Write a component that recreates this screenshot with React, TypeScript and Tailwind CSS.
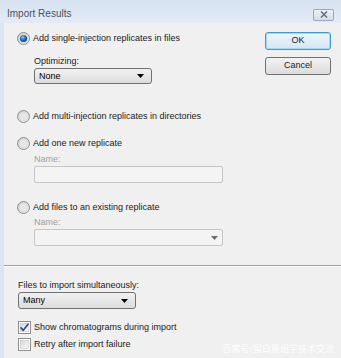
import React from "react";

const font = { fontFamily: '"Liberation Sans", Arial, sans-serif' };

function Radio({ checked }: { checked?: boolean }) {
  return (
    <svg width="13" height="13" viewBox="0 0 13 13" className="shrink-0">
      <defs>
        <linearGradient id={checked ? "rgc" : "rgu"} x1="0" y1="0" x2="1" y2="1">
          <stop offset="0" stopColor="#c9c9c9" />
          <stop offset="1" stopColor="#f7f7f7" />
        </linearGradient>
        <radialGradient id="dot" cx="0.4" cy="0.35" r="0.7">
          <stop offset="0" stopColor="#8fd1f5" />
          <stop offset="0.5" stopColor="#1a74c4" />
          <stop offset="1" stopColor="#0c3f78" />
        </radialGradient>
      </defs>
      <circle cx="6.5" cy="6.5" r="6" fill={`url(#${checked ? "rgc" : "rgu"})`} stroke="#8f8f8f" strokeWidth="1" />
      <circle cx="6.5" cy="6.5" r="4.5" fill="#e6e6e6" stroke="#d0d0d0" strokeWidth="0.6" />
      {checked && <circle cx="6.5" cy="6.5" r="3.6" fill="url(#dot)" />}
    </svg>
  );
}

function Checkbox({ checked }: { checked?: boolean }) {
  return (
    <svg width="13" height="13" viewBox="0 0 13 13" className="shrink-0">
      <defs>
        <linearGradient id="cbg" x1="0" y1="0" x2="1" y2="1">
          <stop offset="0" stopColor="#d6d6d6" />
          <stop offset="1" stopColor="#fbfbfb" />
        </linearGradient>
      </defs>
      <rect x="0.5" y="0.5" width="12" height="12" fill="#fff" stroke="#8e8f8f" />
      <rect x="2.5" y="2.5" width="8" height="8" fill="url(#cbg)" stroke="#c6c6c6" strokeWidth="0.6" />
      {checked && (
        <path d="M3 6.8 L5.3 9.3 L10 3.2" fill="none" stroke="#2a4c8e" strokeWidth="1.7" strokeLinecap="round" strokeLinejoin="round" />
      )}
    </svg>
  );
}

function Arrow({ color = "#000" }: { color?: string }) {
  return (
    <svg width="7" height="4" viewBox="0 0 7 4" className="shrink-0">
      <path d="M0 0 H7 L3.5 4 Z" fill={color} />
    </svg>
  );
}

function Combo({ text, w, h }: { text: string; w: string; h: string }) {
  return (
    <div
      className={`${w} ${h} rounded-[3px] border border-[#707070] bg-gradient-to-b from-[#f2f2f2] to-[#dcdcdc] flex items-center justify-between pl-[4px] pr-[7px] text-[9px] text-black`}
    >
      <span className="leading-none">{text}</span>
      <Arrow />
    </div>
  );
}

export default function App() {
  return (
    <div className="w-[341px] h-[358px] bg-[#dae5f3] flex flex-col overflow-hidden text-[#1a1a1a]" style={font}>
      {/* title bar */}
      <div className="h-[23px] shrink-0 flex items-center justify-between pl-[7px] pr-[7px] bg-gradient-to-b from-[#d7e3f1] to-[#e3ebf6]">
        <span className="text-[10px] text-[#4a5566] leading-none mt-[5px]">Import Results</span>
        <div className="mt-[6px] w-[21px] h-[12px] rounded-[2px] border border-[#9aa7b8] bg-gradient-to-b from-[#eef2f7] to-[#d5dde8] flex items-center justify-center">
          <svg width="8" height="7" viewBox="0 0 8 7">
            <path d="M1 0.5 L7 6.5 M7 0.5 L1 6.5" stroke="#6a7486" strokeWidth="1.6" />
          </svg>
        </div>
      </div>

      {/* body */}
      <div className="flex-1 ml-[4px] bg-[#f0f0f0] relative flex flex-col">
        <div className="flex justify-between">
          <div className="flex flex-col pl-[13px] text-[9px]">
            <div className="mt-[9px] h-[13px] flex items-center gap-[3px]">
              <Radio checked />
              <span className="leading-none">Add single-injection replicates in files</span>
            </div>
            <div className="ml-[17px] mt-[11px] h-[11px] leading-[11px]">Optimizing:</div>
            <div className="ml-[17px] mt-[1px]">
              <Combo text="None" w="w-[118px]" h="h-[16px]" />
            </div>
            <div className="mt-[26px] h-[13px] flex items-center gap-[3px]">
              <Radio />
              <span className="leading-none">Add multi-injection replicates in directories</span>
            </div>
            <div className="mt-[14px] h-[13px] flex items-center gap-[3px]">
              <Radio />
              <span className="leading-none">Add one new replicate</span>
            </div>
            <div className="ml-[17px] mt-[4px] h-[11px] leading-[11px] text-[#a0a0a0]">Name:</div>
            <div className="ml-[17px] mt-[1px] w-[189px] h-[17px] rounded-[2px] border border-[#c5c5c5] bg-[#f4f4f4]" />
            <div className="mt-[18px] h-[13px] flex items-center gap-[3px]">
              <Radio />
              <span className="leading-none">Add files to an existing replicate</span>
            </div>
            <div className="ml-[17px] mt-[3px] h-[11px] leading-[11px] text-[#a0a0a0]">Name:</div>
            <div className="ml-[17px] mt-[1px] w-[189px] h-[17px] rounded-[2px] border border-[#c5c5c5] bg-[#f4f4f4] flex items-center justify-end pr-[4px]">
              <Arrow color="#6d6d6d" />
            </div>
          </div>
          <div className="flex flex-col pr-[10px] text-[9px]">
            <div className="mt-[9px] w-[66px] h-[18px] rounded-[3px] border border-[#3c9ad8] bg-gradient-to-b from-[#eef6fc] to-[#d4e6f4] flex items-center justify-center shadow-[inset_0_0_0_1px_#a7d8f5]">
              OK
            </div>
            <div className="mt-[7px] w-[66px] h-[18px] rounded-[3px] border border-[#707070] bg-gradient-to-b from-[#f2f2f2] to-[#dcdcdc] flex items-center justify-center">
              Cancel
            </div>
          </div>
        </div>

        <div className="mt-[19px] h-[1px] bg-[#a0a0a0]" />
        <div className="h-[1px] bg-white" />

        <div className="flex flex-col pl-[14px] text-[9px]">
          <div className="mt-[13px] h-[11px] leading-[11px]">Files to import simultaneously:</div>
          <div className="mt-[1px]">
            <Combo text="Many" w="w-[118px]" h="h-[17px]" />
          </div>
          <div className="mt-[12px] h-[13px] flex items-center gap-[3px]">
            <Checkbox checked />
            <span className="leading-none">Show chromatograms during import</span>
          </div>
          <div className="mt-[4px] h-[13px] flex items-center gap-[3px]">
            <Checkbox />
            <span className="leading-none">Retry after import failure</span>
          </div>
        </div>

        <div
          className="absolute right-[7px] bottom-[5px] text-[9px] leading-none text-white/90"
          style={{ fontFamily: '"Noto Sans CJK SC", sans-serif' }}
        >
          百家号/蛋白质组学技术交流
        </div>
      </div>
    </div>
  );
}
